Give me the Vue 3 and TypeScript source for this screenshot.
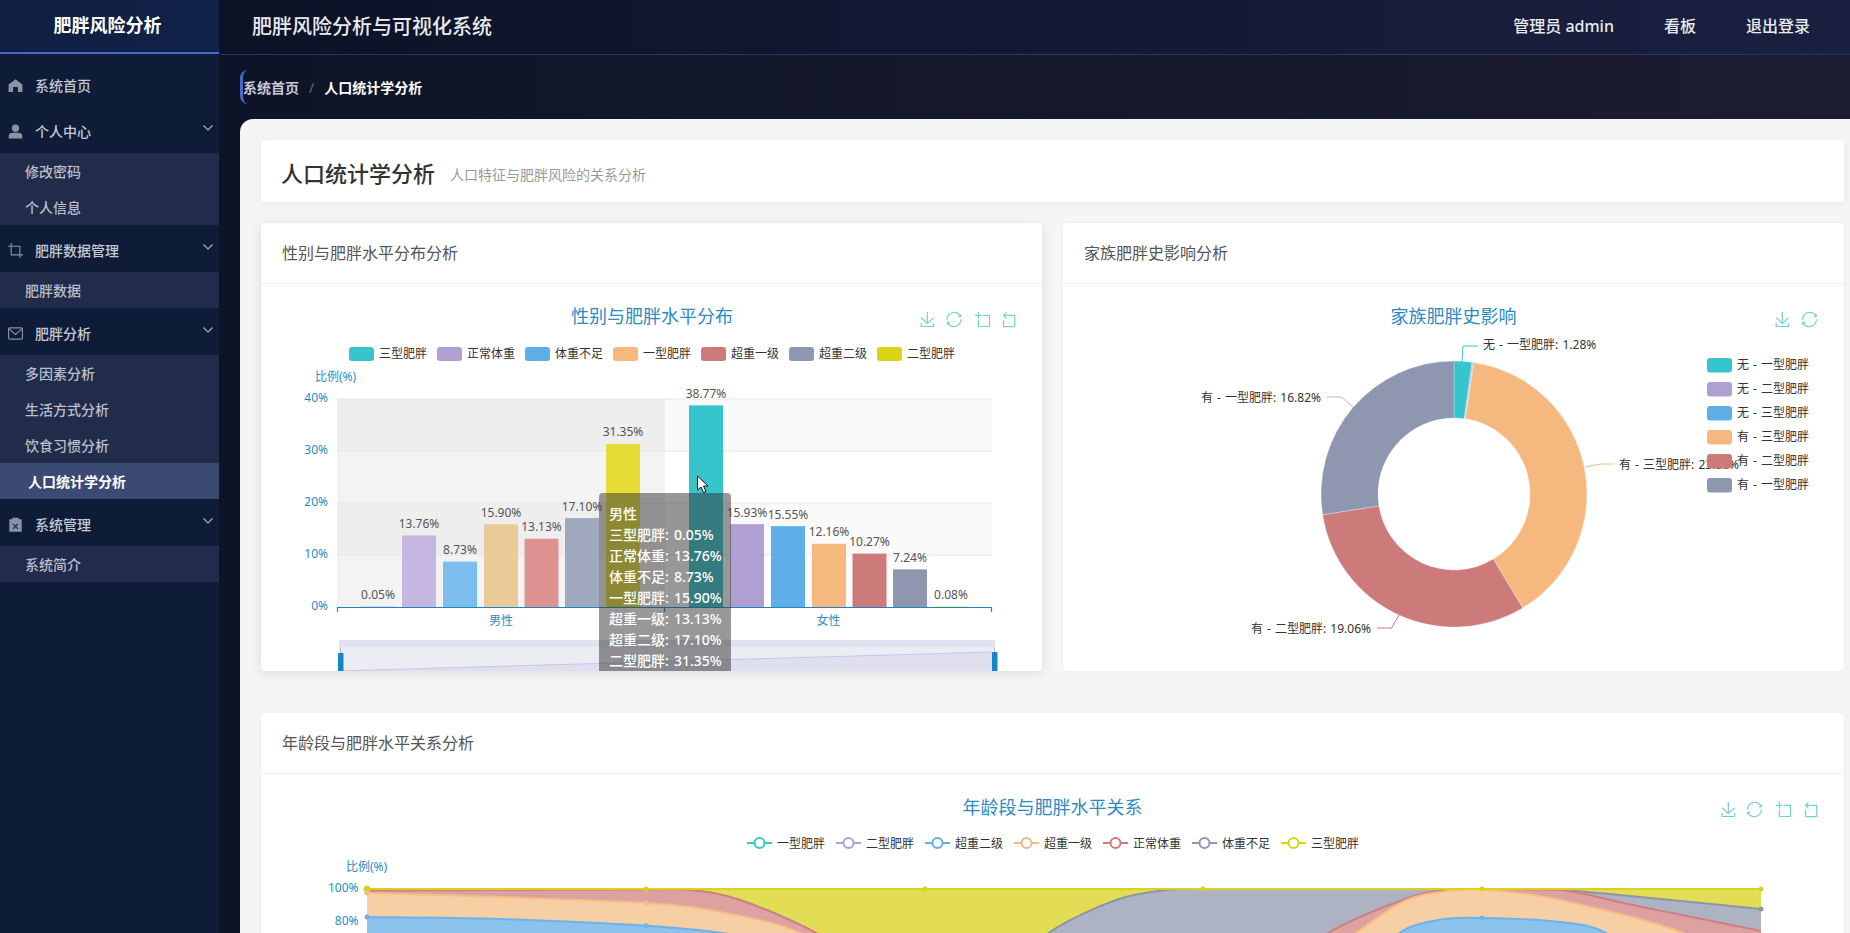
<script setup lang="ts">
type Pt = [number, number]

const T = '#36c5cc', P = '#b09fd3', B = '#5eafe8', O = '#f5b980', R = '#cd7a7a', S = '#8e97af', Y = '#dad414'

const menu = [
  { icon: 'home', label: '系统首页', arrow: false, sub: [] as string[] },
  { icon: 'user', label: '个人中心', arrow: true, sub: ['修改密码', '个人信息'] },
  { icon: 'crop', label: '肥胖数据管理', arrow: true, sub: ['肥胖数据'] },
  { icon: 'mail', label: '肥胖分析', arrow: true, sub: ['多因素分析', '生活方式分析', '饮食习惯分析', '人口统计学分析'] },
  { icon: 'clip', label: '系统管理', arrow: true, sub: ['系统简介'] },
]
const activeSub = '人口统计学分析'

const icons = {
  save: 'M4.7,22.9L29.3,45.5L54.7,23.4M4.6,43.6L4.6,58L53.8,58L53.8,43.6M29.2,45.1L29.2,0',
  restore: 'M47,18.9h9.8V8.7 M56.3,20.1C52.1,9,40.5,0.6,26.8,2.1C12.6,3.7,1.6,16.2,2.1,30.6 M13,41.1H3.1v10.2 M3.7,39.9c4.2,11.1,15.8,19.5,29.5,18c14.2-1.6,25.2-14.1,24.7-28.5',
  zoom: 'M0,13.5h26.9 M13.5,26.9V0 M32.1,13.5H58V58H13.5V32.1',
  back: 'M22,1.4L9.9,13.5l12.3,12.3 M10.3,13.5H54.9v44.6H10.3v-26',
}

function tools(y: number, list: [keyof typeof icons, number][]) {
  return list.map(([k, x]) => ({ d: icons[k], tr: `translate(${x} ${y}) scale(0.25)` }))
}
const tools1 = tools(312, [['save', 920], ['restore', 946.5], ['zoom', 975], ['back', 1001]])
const tools2 = tools(312, [['save', 1775], ['restore', 1802]])
const tools3 = tools(802, [['save', 1721], ['restore', 1747], ['zoom', 1776], ['back', 1803]])

const legend1 = [['三型肥胖', T], ['正常体重', P], ['体重不足', B], ['一型肥胖', O], ['超重一级', R], ['超重二级', S], ['二型肥胖', Y]]
  .map(([t, c], i) => ({ t, c, x: 349 + i * 88 }))

const bands = [
  { x: 337, w: 328, y: 399, c: '#eeeeee' }, { x: 337, w: 328, y: 451, c: '#f3f3f3' },
  { x: 337, w: 328, y: 503, c: '#eeeeee' }, { x: 337, w: 328, y: 555, c: '#f3f3f3' },
  { x: 665, w: 327, y: 399, c: '#fafafa' }, { x: 665, w: 327, y: 503, c: '#fafafa' },
]
const grid = [399, 451, 503, 555]
const yTicks = [['40%', 399], ['30%', 451], ['20%', 503], ['10%', 555], ['0%', 607]] as [string, number][]

const bars = ([
  [0.05, 361, '#c6d'], [13.76, 402, '#c6b6e2'], [8.73, 443, '#7cbfef'], [15.9, 484, '#e9cb97'],
  [13.13, 524.5, '#de9191'], [17.1, 565, '#a0a9be'], [31.35, 606, '#e6de35'],
  [38.77, 689, T], [15.93, 730, P], [15.55, 771, B], [12.16, 812, O], [10.27, 852.5, R], [7.24, 893, S], [0.08, 934, '#dad414'],
] as [number, number, string][]).map(([v, x, c]) => ({
  x, c, h: v * 5.2, y: 607 - v * 5.2, label: v.toFixed(2) + '%', lx: x + 17, ly: 600 - v * 5.2 - 5,
}))

const tooltip = ['男性', '三型肥胖: 0.05%', '正常体重: 13.76%', '体重不足: 8.73%', '一型肥胖: 15.90%', '超重一级: 13.13%', '超重二级: 17.10%', '二型肥胖: 31.35%']

const CX = 1454, CY = 494, RO = 133, RI = 76
function arc(a0: number, a1: number) {
  const pt = (r: number, a: number) => {
    const t = (a * Math.PI) / 180
    return `${(CX + r * Math.sin(t)).toFixed(2)},${(CY - r * Math.cos(t)).toFixed(2)}`
  }
  const big = a1 - a0 > 180 ? 1 : 0
  return `M${pt(RO, a0)}A${RO},${RO} 0 ${big} 1 ${pt(RO, a1)}L${pt(RI, a1)}A${RI},${RI} 0 ${big} 0 ${pt(RI, a0)}Z`
}
const pie = [
  { d: arc(0, 7.8), c: T }, { d: arc(7.8, 8.3), c: P }, { d: arc(8.3, 8.6), c: B },
  { d: arc(8.6, 148.9), c: O }, { d: arc(148.9, 261), c: R }, { d: arc(261, 360), c: S },
]
const pieLabels = [
  { t: '无 - 一型肥胖: 1.28%', x: 1483, y: 344, line: '1462,361 1463,346 1478,346', c: T, a: 'start' },
  { t: '有 - 一型肥胖: 16.82%', x: 1321, y: 397, line: '1353,407 1341.5,397 1326,397', c: '#bdbdbd', a: 'end' },
  { t: '有 - 三型肥胖: 23.86%', x: 1619, y: 464, line: '1585,467 1601,464 1614,464', c: O, a: 'start' },
  { t: '有 - 二型肥胖: 19.06%', x: 1371, y: 628, line: '1399,615 1391.5,628 1377,628', c: R, a: 'end' },
]
const legend2 = [['无 - 一型肥胖', T], ['无 - 二型肥胖', P], ['无 - 三型肥胖', B], ['有 - 三型肥胖', O], ['有 - 二型肥胖', R], ['有 - 一型肥胖', S]]
  .map(([t, c], i) => ({ t, c, y: 358 + i * 24 }))

const legend3 = [['一型肥胖', T], ['二型肥胖', P], ['超重二级', B], ['超重一级', O], ['正常体重', R], ['体重不足', S], ['三型肥胖', Y]]
  .map(([t, c], i) => ({ t, c, x: 747 + i * 89 }))

function smooth(p: Pt[]) {
  const cy = (v: number) => Math.min(Math.max(v, 889), 975).toFixed(1)
  let d = `M${p[0][0]},${p[0][1]}`
  for (let i = 0; i < p.length - 1; i++) {
    const a = p[Math.max(i - 1, 0)], b = p[i], c = p[i + 1], e = p[Math.min(i + 2, p.length - 1)]
    const c1x = b[0] + (c[0] - a[0]) / 6, c1y = b[1] + (c[1] - a[1]) / 6
    const c2x = c[0] - (e[0] - b[0]) / 6, c2y = c[1] - (e[1] - b[1]) / 6
    d += `C${c1x.toFixed(1)},${cy(c1y)} ${c2x.toFixed(1)},${cy(c2y)} ${c[0]},${c[1]}`
  }
  return d
}
const layer = (pts: Pt[], fill: string, line: string) => {
  const d = smooth(pts)
  return { line: d, area: `${d}L1761,980L367,980Z`, fill, stroke: line }
}
const layers = [
  layer([[367, 889.5], [646, 889], [690, 890], [740, 900], [816, 933], [870, 972], [1010, 972], [1050, 932], [1116, 900], [1167, 890], [1203, 889], [1482, 889], [1560, 890], [1650, 898], [1761, 909]], '#aeb3c4', '#8f94a6'),
  layer([[367, 890.5], [646, 889.5], [690, 890], [740, 900], [816, 933], [870, 972], [1280, 972], [1328, 933], [1402, 900], [1443, 890], [1482, 889], [1560, 890], [1642, 907], [1761, 931]], '#dea1a1', '#cf8080'),
  layer([[367, 893], [500, 897], [646, 903], [720, 912], [801, 933], [850, 972], [1310, 972], [1356, 933], [1407, 900], [1448, 891], [1482, 889.5], [1560, 900], [1683, 933], [1730, 972], [1761, 972]], '#f7cfa4', '#f5be85'),
  layer([[367, 917], [500, 919], [646, 925.7], [729, 934], [790, 948], [850, 972], [1360, 972], [1399, 933], [1438, 920], [1482, 918], [1560, 922], [1606, 933], [1660, 972], [1761, 972]], '#8cc3ec', '#6cb3e8'),
]
const dots = [
  [367, 889, '#d8d01c', 3.5], [646, 889, '#d8d01c', 2.5], [925, 889, '#d8d01c', 2.5], [1203, 889, '#d8d01c', 2.5], [1482, 889, '#d8d01c', 2.5], [1761, 889, '#d8d01c', 2.5],
  [367, 893, '#f5be85', 2.5], [646, 903, '#f5be85', 2.5], [367, 917, '#6cb3e8', 2.5], [646, 925.7, '#6cb3e8', 2.5], [1482, 918, '#6cb3e8', 2.5], [1761, 909, '#8f94a6', 2.5],
] as [number, number, string, number][]
</script>

<template>
  <div class="app">
    <aside class="sidebar">
      <div class="logo">肥胖风险分析</div>
      <nav class="nav">
        <div v-for="m in menu" :key="m.label">
          <div class="item">
            <svg class="ico" viewBox="0 0 16 16">
              <path v-if="m.icon === 'home'" class="fill" d="M8 1.200 15.400 7v7.800h-4.800V9.600H5.400v5.200H.6V7Z" />
              <path v-else-if="m.icon === 'user'" class="fill" d="M8 .6a3.900 3.900 0 1 1 0 7.800A3.900 3.900 0 0 1 8 .6ZM.8 15.400v-2.600c0-2.200 2-3.400 4-3.400h6.400c2 0 4 1.200 4 3.400v2.600Z" />
              <path v-else-if="m.icon === 'crop'" class="line" d="M3.400 0v12.600H16M0 3.400h12.600V16" />
              <g v-else-if="m.icon === 'mail'">
                <rect class="line" x=".6" y="2" width="14.800" height="12" rx="1.200" />
                <path class="line" d="M1 3l7 6 7-6" />
              </g>
              <g v-else>
                <path class="fill" d="M1.400 2.400h3.200V.8h6.800v1.600h3.200v13.400H1.400Z" />
                <path class="x" d="M5.400 7.400l5.200 5.200M10.600 7.400l-5.200 5.200" />
              </g>
            </svg>
            <span class="item-text">{{ m.label }}</span>
            <svg v-if="m.arrow" class="chev" viewBox="0 0 10 6"><path d="M.5.5 5 5 9.500.5" /></svg>
          </div>
          <div v-if="m.sub.length" class="subs">
            <div v-for="s in m.sub" :key="s" class="sub" :class="{ active: s === activeSub }">{{ s }}</div>
          </div>
        </div>
      </nav>
    </aside>

    <div class="right">
      <header class="topbar">
        <div class="sys-title">肥胖风险分析与可视化系统</div>
        <div class="top-links">
          <span class="l1">管理员 admin</span>
          <span class="l2">看板</span>
          <span>退出登录</span>
        </div>
      </header>
      <div class="crumb-row">
        <div class="crumb">
          <span class="c1">系统首页</span><span class="sep">/</span><span class="c2">人口统计学分析</span>
        </div>
      </div>

      <main class="content">
        <section class="page-head">
          <h1>人口统计学分析</h1>
          <span class="desc">人口特征与肥胖风险的关系分析</span>
        </section>

        <div class="two">
          <section class="card hover">
            <div class="card-head">性别与肥胖水平分布分析</div>
            <div class="card-body">
              <svg class="chart" width="781" height="387" viewBox="261 284 781 387">
                <text class="ttl" x="652" y="316" text-anchor="middle">性别与肥胖水平分布</text>
                <path v-for="t in tools1" :key="t.tr" class="tool" :d="t.d" :transform="t.tr" />
                <g v-for="l in legend1" :key="l.t">
                  <rect :x="l.x" y="347" width="25" height="14" rx="3" :fill="l.c" />
                  <text class="leg" :x="l.x + 30" y="353">{{ l.t }}</text>
                </g>
                <text class="axis" x="315" y="376">比例(%)</text>
                <rect v-for="b in bands" :key="b.x + '-' + b.y" :x="b.x" :y="b.y" :width="b.w" height="52" :fill="b.c" />
                <line v-for="g in grid" :key="g" x1="337" x2="992" :y1="g" :y2="g" stroke="#e6e6e6" />
                <text v-for="t in yTicks" :key="t[0]" class="axis" x="328" :y="t[1] - 2" text-anchor="end">{{ t[0] }}</text>
                <g v-for="b in bars" :key="b.x">
                  <rect :x="b.x" :y="b.y" width="34" :height="b.h" :fill="b.c" />
                  <text class="val" :x="b.lx" :y="b.ly" text-anchor="middle">{{ b.label }}</text>
                </g>
                <path d="M337.500,612V607.500H991.500V612M664.500,607.500V612" fill="none" stroke="#1d86c2" stroke-width="1.200" />
                <text class="axis" x="501" y="620" text-anchor="middle">男性</text>
                <text class="axis" x="828.500" y="620" text-anchor="middle">女性</text>

                <rect x="339" y="640" width="656" height="7" fill="#e0e2ef" />
                <rect x="339" y="647" width="656" height="24" fill="#ecedf4" />
                <path d="M339,671 L992,652 V671Z" fill="#e0dff0" />
                <path d="M339,671 L992,652" fill="none" stroke="#c3c6ea" />
                <path d="M340.500,647V653M994.500,647V652" stroke="#b8bcc8" fill="none" />
                <rect x="338" y="653" width="5.500" height="20" rx="1" fill="#1486c6" />
                <rect x="992" y="652" width="5.500" height="20" rx="1" fill="#1486c6" />

                <path d="M697.500,476 V490 L701,487 L703.500,492.500 L706,491.500 L703.500,486 L708,486 Z" fill="#fff" stroke="#111" stroke-width="1" />
              </svg>
              <div class="tip">
                <div v-for="t in tooltip" :key="t">{{ t }}</div>
              </div>
            </div>
          </section>

          <section class="card">
            <div class="card-head">家族肥胖史影响分析</div>
            <div class="card-body">
              <svg class="chart" width="781" height="387" viewBox="1063 284 781 387">
                <text class="ttl" x="1453.500" y="316" text-anchor="middle">家族肥胖史影响</text>
                <path v-for="t in tools2" :key="t.tr" class="tool" :d="t.d" :transform="t.tr" />
                <path v-for="p in pie" :key="p.c" :d="p.d" :fill="p.c" stroke="#fff" stroke-opacity=".6" stroke-width=".5" />
                <g v-for="l in pieLabels" :key="l.t">
                  <polyline :points="l.line" fill="none" :stroke="l.c" />
                  <text class="leg sp" :x="l.x" :y="l.y" :text-anchor="l.a">{{ l.t }}</text>
                </g>
                <g v-for="l in legend2" :key="l.t">
                  <rect x="1707" :y="l.y" width="25" height="14.500" rx="3" :fill="l.c" />
                  <text class="leg sp" x="1737" :y="l.y + 6.500">{{ l.t }}</text>
                </g>
              </svg>
            </div>
          </section>
        </div>

        <section class="card wide">
          <div class="card-head">年龄段与肥胖水平关系分析</div>
          <div class="card-body">
            <svg class="chart" width="1583" height="400" viewBox="261 774 1583 400">
              <text class="ttl" x="1052.500" y="807" text-anchor="middle">年龄段与肥胖水平关系</text>
              <path v-for="t in tools3" :key="t.tr" class="tool" :d="t.d" :transform="t.tr" />
              <g v-for="l in legend3" :key="l.t">
                <line :x1="l.x" :x2="l.x + 25" y1="843" y2="843" :stroke="l.c" stroke-width="2" />
                <circle :cx="l.x + 12.500" cy="843" r="5" fill="#fff" :stroke="l.c" stroke-width="2" />
                <text class="leg" :x="l.x + 30" y="843">{{ l.t }}</text>
              </g>
              <text class="axis" x="346" y="866">比例(%)</text>
              <text class="axis" x="358.500" y="887" text-anchor="end">100%</text>
              <text class="axis" x="358.500" y="920" text-anchor="end">80%</text>
              <rect x="367" y="889" width="1394" height="100" fill="#e3dd55" />
              <g v-for="l in layers" :key="l.fill">
                <path :d="l.area" :fill="l.fill" />
                <path :d="l.line" fill="none" :stroke="l.stroke" stroke-width="2" />
              </g>
              <line x1="367" x2="1761" y1="889" y2="889" stroke="#dad21e" stroke-width="2" />
              <circle v-for="d in dots" :key="d[0] + '-' + d[1]" :cx="d[0]" :cy="d[1]" :r="d[3]" :fill="d[2]" />
            </svg>
          </div>
        </section>
      </main>
    </div>
  </div>
</template>

<style>
html, body { margin: 0; height: 100%; overflow: hidden; background: #0f1529; }
</style>

<style scoped>
.app {
  display: flex; width: 1850px; height: 933px; overflow: hidden;
  font-family: "Noto Sans", "Noto Sans CJK SC", sans-serif;
}
.sidebar { width: 219px; flex: none; margin-right: 1px; background: #0f1c38; }
.logo {
  height: 52px; line-height: 50px; text-align: center; color: #fff; font-size: 18px; font-weight: 700;
  border-bottom: 2px solid #4a68c8; background: linear-gradient(90deg, #0f1f40, #11224a); padding-right: 4px; box-sizing: content-box; width: 215px;
}
.nav { padding-top: 6px; }
.item { height: 47px; display: flex; align-items: center; position: relative; color: #c3c9d6; font-size: 14px; font-weight: 500; }
.nav > div:first-child .item { height: 46px; }
.ico { width: 15px; height: 15px; margin: 4px 0 0 8px; flex: none; }
.ico .fill { fill: #8a92a3; }
.ico .line { fill: none; stroke: #8a92a3; stroke-width: 1.2; }
.ico .x { fill: none; stroke: #1a2440; stroke-width: 1.2; }
.item-text { margin-left: 12px; padding-top: 3px; }
.chev { position: absolute; right: 6px; top: 19px; width: 10px; height: 6px; }
.chev path { fill: none; stroke: #aab2c2; stroke-width: 1.1; }
.subs { background: #212b4a; }
.sub { height: 36px; line-height: 36px; padding: 1px 0 0 25px; box-sizing: border-box; font-size: 14px; font-weight: 500; color: #b8bfcd; }
.sub.active { background: #3a4a72; color: #fff; padding-left: 28px; font-weight: 700; }

.right { flex: 1; min-width: 0; display: flex; flex-direction: column; background: linear-gradient(90deg, #0e1428, #1c1c32); }
.topbar {
  height: 54px; flex: none; display: flex; align-items: center; justify-content: space-between;
  border-bottom: 1px solid #2a3666; background: linear-gradient(90deg, #0c1226, #1a2040);
  color: #e9ebf1; box-sizing: content-box;
}
.sys-title { font-size: 20px; margin-left: 32px; font-weight: 500; margin-top: -4px; }
.top-links { display: flex; font-size: 16px; margin-right: 40px; margin-top: -4px; font-weight: 500; }
.l1 { margin-right: 50px; }
.l2 { margin-right: 50px; }
.crumb-row { height: 64px; flex: none; padding-left: 20px; box-sizing: border-box; padding-top: 15px; }
.crumb {
  height: 34px; display: inline-flex; align-items: center; font-size: 14px; font-weight: 700;
  border-left: 3px solid #4a68c8; border-radius: 8px 0 0 8px;
}
.c1 { color: #c6cad6; }
.sep { color: #666b7c; margin: 0 10px; font-weight: 400; }
.c2 { color: #fff; }

.content {
  flex: 1; margin-left: 20px; background: #f5f5f5; border-radius: 13px 0 0 0;
  padding: 21px 6px 0 21px; min-height: 0; overflow: hidden; box-sizing: border-box;
}
.page-head {
  height: 62px; background: #fff; border-radius: 4px; padding-left: 20px; display: flex; align-items: center;
  box-shadow: 0 2px 8px rgba(0, 0, 0, .06);
}
.page-head h1 { margin: 0; font-size: 22px; font-weight: 500; color: #333; margin-top: 1px; }
.desc { margin-left: 15px; font-size: 14px; color: #999; margin-top: 6px; }
.two { display: grid; grid-template-columns: 781px 781px; column-gap: 21px; margin-top: 21px; }
.card { background: #fff; border-radius: 4px; overflow: hidden; box-shadow: 0 0 0 1px #eeeff2; }
.two .card { height: 448px; }
.card.hover { box-shadow: 0 2px 12px rgba(0, 0, 0, .1); }
.wide { margin-top: 42px; }
.card-head {
  height: 60px; line-height: 60px; padding-left: 21px; font-size: 16px; color: #555;
  border-bottom: 1px solid #ebeef5;
}
.card-body { position: relative; }
.chart { display: block; }
.ttl { font-size: 18px; fill: #2b8cc4; dominant-baseline: central; }
.tool { fill: none; stroke: #74d0d3; stroke-width: 1.2; vector-effect: non-scaling-stroke; }
.leg { font-size: 12px; fill: #333; dominant-baseline: central; }
.sp { word-spacing: 1px; }
.axis { font-size: 12px; fill: #2b8cc4; dominant-baseline: central; }
.val { font-size: 12px; fill: #555; dominant-baseline: central; }
.tip {
  position: absolute; left: 338px; top: 209px; width: 132px; box-sizing: border-box; padding: 10px;
  height: 260px; border-radius: 4px; background: rgba(50, 50, 50, .5); color: #fff; font-size: 14px; line-height: 21px; white-space: nowrap; word-spacing: 1.5px; font-weight: 500;
}
</style>
